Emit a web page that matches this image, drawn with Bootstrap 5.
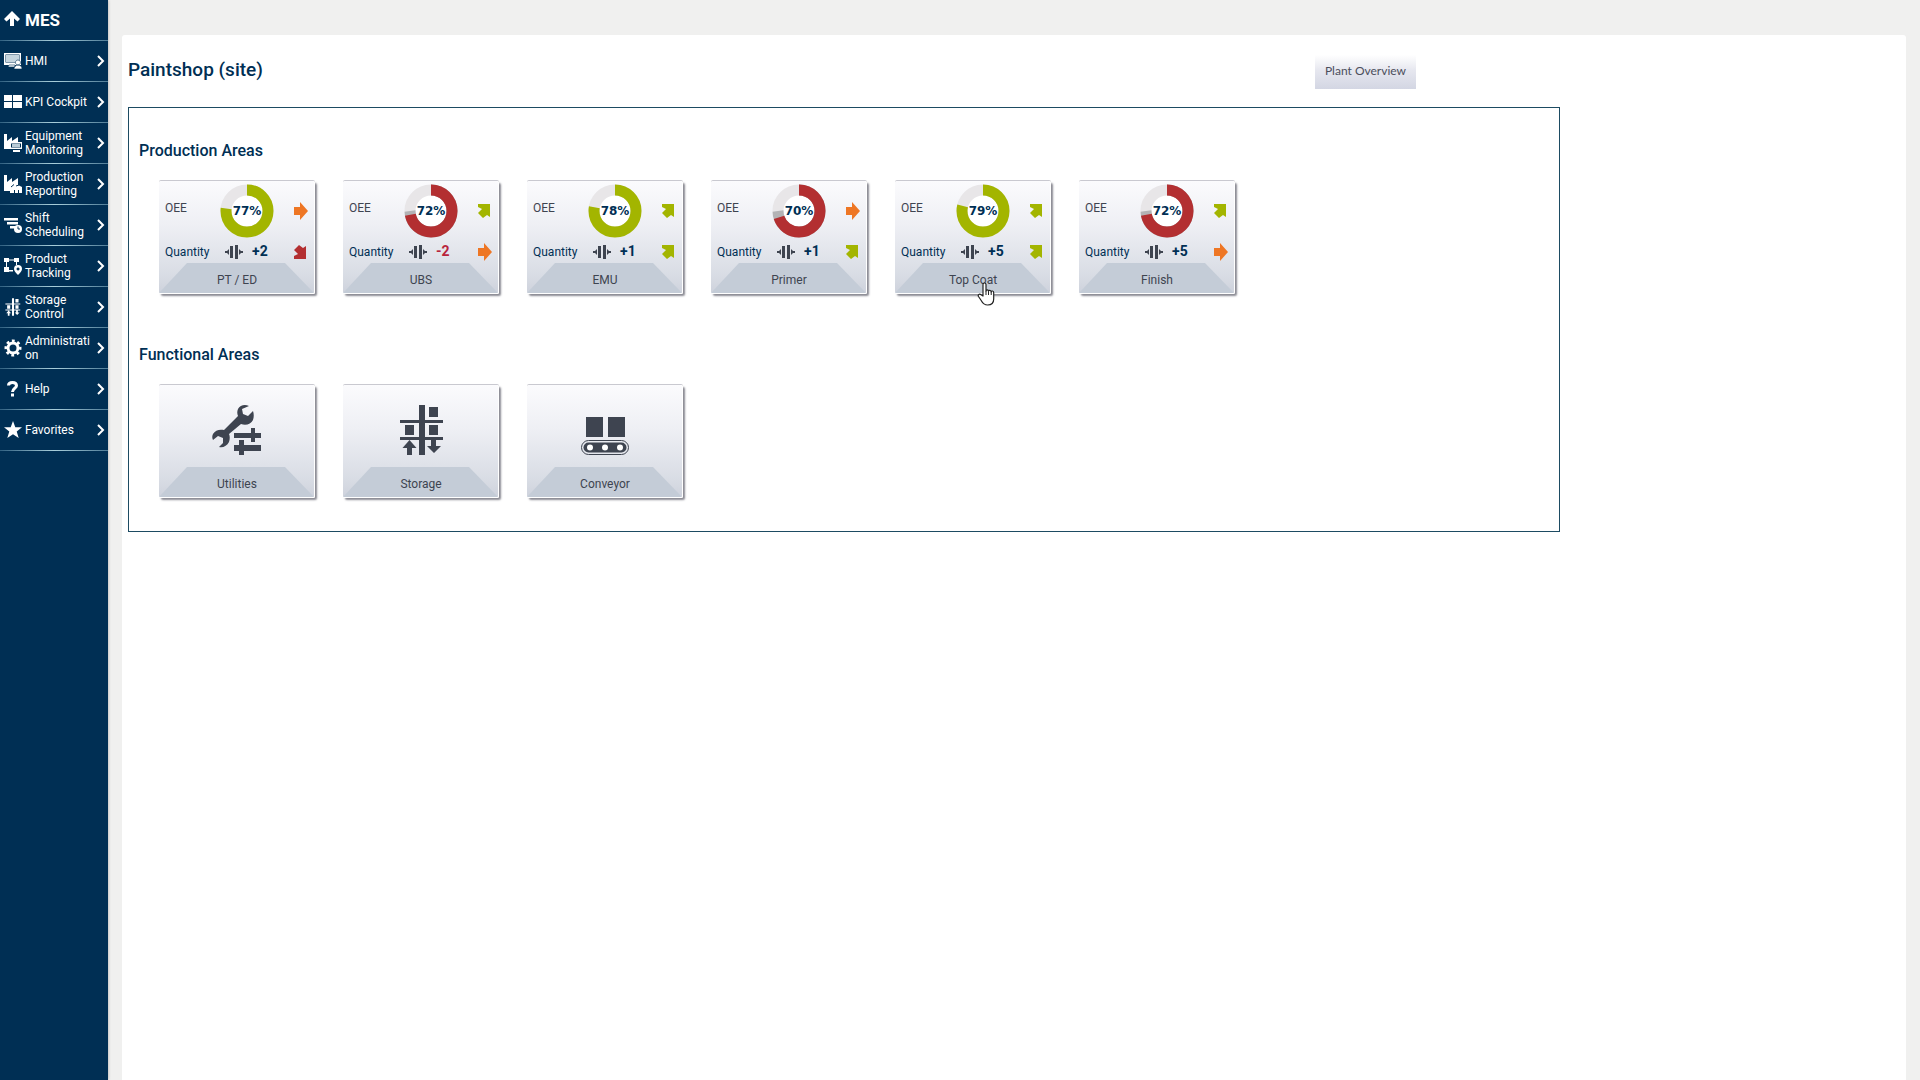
<!DOCTYPE html>
<html lang="en">
<head>
<meta charset="utf-8">
<meta name="viewport" content="width=device-width, initial-scale=1">
<title>MES - Paintshop</title>
<link href="https://cdn.jsdelivr.net/npm/bootstrap@5.3.0/dist/css/bootstrap.min.css" rel="stylesheet">
<style>
  :root { --navy: #002f54; --steel: #3e4450; }
  body { font-family: Roboto, "Liberation Sans", sans-serif; color: var(--navy); background: #f0f0ef; }
  a { color: inherit; text-decoration: none; }

  .side { width: 108px; background: var(--navy); color: #fff; box-shadow: 0 0 3px rgba(0,0,0,.3); }
  .side-row { height: 41px; padding: 0 3px 0 4px; color: #fff; border-bottom: 1px solid;
    border-image: linear-gradient(90deg, #2f5f80, #a9cfdb 50%, #4f7c97) 1; }
  .side-row svg { flex: none; fill: #fff; }
  .side-row .pict { width: 18px; height: 18px; margin-right: 3px; }
  .side-row .caption { flex: 1; padding-right: 4px; font-size: 12px; line-height: 14px; overflow-wrap: anywhere; }
  .side-row .chev { width: 8px; height: 12px; fill: none; stroke: #fff; stroke-width: 2; }
  .side-brand { font-size: 17px; font-weight: 700; }
  .side-brand span { padding-top: 2px; }

  .sheet { margin: 35px 14px 0 14px; padding: 20px 346px 0 6px; background: #fff; border-radius: 3px 3px 0 0; }
  .site-title { font-size: 19px; line-height: 30px; font-weight: 500; margin: 0; }
  .overview-btn { font: 12px/18px Lato, sans-serif; color: #4b4e5c; border: 0; padding: 7px 10px 9px;
    background: linear-gradient(#fff, #e6e7ef 45%, #d3d6e3); margin-right: 144px; }
  .frame { border: 1px solid #1d4b62; margin-top: 18px; padding: 33px 10px; }
  .area-title { font-size: 16px; line-height: 20px; font-weight: 500; margin: 0; }
  .tiles + .area-title { margin-top: 31px; }
  .tiles { display: flex; flex-wrap: wrap; gap: 28px; padding: 20px; }

  .tile { width: 156px; height: 113px; display: flex; flex-direction: column; color: var(--steel);
    background: linear-gradient(#fbfbfd, #eeeff4 40%, #d8dce4 85%, #ced2dc);
    border: solid #fff; border-width: 0 1px 1px 0; border-radius: 2px;
    box-shadow: 0 -1px 0 #c9c9d0, 2px 2px 2px rgba(60,60,75,.6); }
  .tile-foot { height: 30px; padding-left: 1px; font-size: 12px; line-height: 35px; text-align: center;
    background: #c4ccd7; clip-path: polygon(28px 0, 126px 0, 100% 100%, 0 100%); }
  .gauges { flex: 1; display: grid; grid-template-columns: 55px 1fr 29px; grid-template-rows: 59px 23px;
    align-items: center; padding-left: 6px; font-size: 12px; }
  .gauges > .mark-arrow { width: 16px; height: 18px; justify-self: center; }
  .gauges .lab { color: var(--navy); }
  .gauges .lab-top { color: var(--steel); padding-bottom: 5px; }
  .ring { width: 54px; height: 54px; display: block; }
  .ring circle { fill: none; stroke-width: 11; }
  .ring circle:first-child { fill: #fff; }
  .ring text { font: bold 12px "DejaVu Sans", sans-serif; fill: var(--navy); text-anchor: middle; }
  .delta { display: flex; align-items: center; gap: 9px; font-size: 14px; font-weight: 700; color: var(--navy); padding-left: 5px; }
  .delta svg { width: 18px; height: 16px; }
  .delta .neg { color: #b9243c; }
  .picto { flex: 1; display: flex; justify-content: center; align-items: end; padding-bottom: 11px; }
  .picto svg { width: 52px; height: 52px; }
  .pointer { position: absolute; left: 82px; top: 101px; width: 18px; height: 24px; z-index: 2; }
</style>
<script src="https://cdn.jsdelivr.net/npm/bootstrap@5.3.0/dist/js/bootstrap.bundle.min.js"></script>
</head>
<body>
<svg width="0" height="0" class="d-none" aria-hidden="true">
  <symbol id="chev" viewBox="0 0 8 12"><path d="M1 1l5 5-5 5"/></symbol>
  <symbol id="a-flat" viewBox="0 0 16 18"><path fill="#ee7624" d="M2 5h6V0l8 9-8 9v-5H2z"/></symbol>
  <symbol id="a-up" viewBox="0 0 16 18"><path fill="#a3b500" d="M2 2h12v13l-3-2-4 3-5-5 4-4-4-2z"/></symbol>
  <symbol id="a-down" viewBox="0 0 16 18"><path fill="#b32f31" d="M2 16h12V3l-3 2-4-3-5 5 4 4-4 2z"/></symbol>
  <symbol id="takt" viewBox="0 0 18 16"><path fill="#3e4450" d="M5 2h3v12H5zM10 1h3v14h-3zM4 5v6L2 9H0V7h2zM14 5v6l2-2h2V7h-2z"/></symbol>
  <symbol id="rack" viewBox="0 0 52 52"><path d="M21 1h6v50h-6zM2 16h43v3H2zM2 33h43v3H2zM31 3h9v10h-9zM7 21h9v10H7zM31 21h9v10h-9zM11.500 36l7 8h-4.500v7h-5v-7h-4.500zM33 36h5v6h5l-7 7-7-7h4z"/></symbol>
</svg>

<div class="d-flex min-vh-100">
  <nav class="side flex-shrink-0" aria-label="Main">
    <a class="side-row side-brand d-flex align-items-center" href="#">
      <svg class="pict" viewBox="0 0 18 18"><path d="M8 0l8 8-2.500 2.500L10 7.500V15H6V7.500L2.500 10.500 0 8z"/></svg><span>MES</span></a>
    <a class="side-row d-flex align-items-center" href="#">
      <svg class="pict" viewBox="0 0 18 18"><path fill-rule="evenodd" d="M0 1h17v12H0zM1.500 2.500v8h14v-8z"/><path fill="#c6d5de" d="M2 3h13v7H2z"/><path d="M5 13h6v2H4zM14 8a2.500 2.500 0 1 1-.1 0zM10 17c0-3 2-4 4-4s4 1 4 4z" stroke="#002f54" stroke-width=".6"/></svg>
      <span class="caption">HMI</span><svg class="chev"><use href="#chev"/></svg></a>
    <a class="side-row d-flex align-items-center" href="#">
      <svg class="pict" viewBox="0 0 18 18"><path d="M0 2h8v6H0zM9 2h9v6H9zM0 9h8v6H0zM9 9h9v6H9z"/></svg>
      <span class="caption">KPI Cockpit</span><svg class="chev"><use href="#chev"/></svg></a>
    <a class="side-row d-flex align-items-center" href="#">
      <svg class="pict" viewBox="0 0 18 18"><path d="M0 0h3v7l5-4v4l6-4v6H6v6H0z"/><path d="M6 8h12v7H6zM9 16h7v2H9z"/><path fill="#002f54" d="M7 9.500h10v4H7z"/><path fill="#b9cbd6" d="M8 10h8v3H8z"/></svg>
      <span class="caption">Equipment Monitoring</span><svg class="chev"><use href="#chev"/></svg></a>
    <a class="side-row d-flex align-items-center" href="#">
      <svg class="pict" viewBox="0 0 18 18"><path d="M0 0h3v7l5-4v4l6-4v7l4 2v6h-3v-3h-1v3h-3v-3h-1v3H6v-2H0z"/><path d="M7 12l3-2.500M12 11l3-1" stroke="#002f54"/></svg>
      <span class="caption">Production Reporting</span><svg class="chev"><use href="#chev"/></svg></a>
    <a class="side-row d-flex align-items-center" href="#">
      <svg class="pict" viewBox="0 0 18 18"><path d="M0 2h14v2.500H0zM3 6h11v2.500H3zM6 10h5v2.500H6z"/><circle cx="14" cy="13" r="4"/><path d="M14 10.500V13h2" fill="none" stroke="#002f54"/></svg>
      <span class="caption">Shift Scheduling</span><svg class="chev"><use href="#chev"/></svg></a>
    <a class="side-row d-flex align-items-center" href="#">
      <svg class="pict" viewBox="0 0 18 18"><path d="M0 1h5v4H0zM10 1h5v4h-5zM0 10h5v5H0zM5 2.500h5v1H5zM2 5h1v5H2zM5 13h4v1.500H5zM12 5h1v3h-1z"/><path fill-rule="evenodd" d="M14 8a4 4 0 0 1 4 4c0 2-2 4-4 6-2-2-4-4-4-6a4 4 0 0 1 4-4zm0 2.500a1.500 1.500 0 1 0 .1 0z"/></svg>
      <span class="caption">Product Tracking</span><svg class="chev"><use href="#chev"/></svg></a>
    <a class="side-row d-flex align-items-center" href="#">
      <svg class="pict" viewBox="0 0 48 52"><use href="#rack" width="52" height="52"/></svg>
      <span class="caption">Storage Control</span><svg class="chev"><use href="#chev"/></svg></a>
    <a class="side-row d-flex align-items-center" href="#">
      <svg class="pict" viewBox="0 0 18 18"><circle cx="9" cy="9" r="5" fill="none" stroke="#fff" stroke-width="3"/><circle cx="9" cy="9" r="7" fill="none" stroke="#fff" stroke-width="3" pathLength="80" stroke-dasharray="5" stroke-dashoffset="2"/></svg>
      <span class="caption">Administration</span><svg class="chev"><use href="#chev"/></svg></a>
    <a class="side-row d-flex align-items-center" href="#">
      <svg class="pict" viewBox="0 0 18 18"><path d="M4.500 5.500C4.500 3 6.500 2.500 8.500 2.500s4 1 4 3.200c0 2.300-4 2.800-4 6.300" fill="none" stroke="#fff" stroke-width="3"/><path d="M7 13.500h3v3H7z"/></svg>
      <span class="caption">Help</span><svg class="chev"><use href="#chev"/></svg></a>
    <a class="side-row d-flex align-items-center" href="#">
      <svg class="pict" viewBox="0 0 18 18"><path d="M9 0l2.300 6.300H18l-5.300 4.200 2 6.500L9 13.200 3.300 17l2-6.500L0 6.300h6.700z"/></svg>
      <span class="caption">Favorites</span><svg class="chev"><use href="#chev"/></svg></a>
  </nav>

  <main class="sheet flex-grow-1">
    <header class="d-flex justify-content-between align-items-start">
      <h1 class="site-title">Paintshop (site)</h1>
      <button type="button" class="overview-btn">Plant Overview</button>
    </header>

    <div class="frame">
      <h2 class="area-title">Production Areas</h2>
      <div class="tiles">
        <a class="tile" href="#">
          <div class="gauges"><span class="lab-top">OEE</span>
            <svg class="ring" viewBox="0 0 54 54"><circle cx="27" cy="27" r="21" stroke="#e8e6e8"/><circle cx="27" cy="27" r="21" stroke="#a3b500" pathLength="100" stroke-dasharray="77 100" transform="rotate(-90 27 27)"/><text x="27" y="31">77%</text></svg>
            <svg class="mark-arrow"><use href="#a-flat"/></svg>
            <span class="lab">Quantity</span><span class="delta"><svg><use href="#takt"/></svg>+2</span><svg class="mark-arrow"><use href="#a-down"/></svg></div>
          <div class="tile-foot">PT / ED</div></a>
        <a class="tile" href="#">
          <div class="gauges"><span class="lab-top">OEE</span>
            <svg class="ring" viewBox="0 0 54 54"><circle cx="27" cy="27" r="21" stroke="#e8e6e8"/><circle cx="27" cy="27" r="21" stroke="#b3b3b5" pathLength="100" stroke-dasharray="75 100" transform="rotate(-90 27 27)"/><circle cx="27" cy="27" r="21" stroke="#b32f31" pathLength="100" stroke-dasharray="72 100" transform="rotate(-90 27 27)"/><text x="27" y="31">72%</text></svg>
            <svg class="mark-arrow"><use href="#a-up"/></svg>
            <span class="lab">Quantity</span><span class="delta"><svg><use href="#takt"/></svg><span class="neg">-2</span></span><svg class="mark-arrow"><use href="#a-flat"/></svg></div>
          <div class="tile-foot">UBS</div></a>
        <a class="tile" href="#">
          <div class="gauges"><span class="lab-top">OEE</span>
            <svg class="ring" viewBox="0 0 54 54"><circle cx="27" cy="27" r="21" stroke="#e8e6e8"/><circle cx="27" cy="27" r="21" stroke="#a3b500" pathLength="100" stroke-dasharray="78 100" transform="rotate(-90 27 27)"/><text x="27" y="31">78%</text></svg>
            <svg class="mark-arrow"><use href="#a-up"/></svg>
            <span class="lab">Quantity</span><span class="delta"><svg><use href="#takt"/></svg>+1</span><svg class="mark-arrow"><use href="#a-up"/></svg></div>
          <div class="tile-foot">EMU</div></a>
        <a class="tile" href="#">
          <div class="gauges"><span class="lab-top">OEE</span>
            <svg class="ring" viewBox="0 0 54 54"><circle cx="27" cy="27" r="21" stroke="#e8e6e8"/><circle cx="27" cy="27" r="21" stroke="#b3b3b5" pathLength="100" stroke-dasharray="75 100" transform="rotate(-90 27 27)"/><circle cx="27" cy="27" r="21" stroke="#b32f31" pathLength="100" stroke-dasharray="70 100" transform="rotate(-90 27 27)"/><text x="27" y="31">70%</text></svg>
            <svg class="mark-arrow"><use href="#a-flat"/></svg>
            <span class="lab">Quantity</span><span class="delta"><svg><use href="#takt"/></svg>+1</span><svg class="mark-arrow"><use href="#a-up"/></svg></div>
          <div class="tile-foot">Primer</div></a>
        <a class="tile position-relative" href="#">
          <div class="gauges"><span class="lab-top">OEE</span>
            <svg class="ring" viewBox="0 0 54 54"><circle cx="27" cy="27" r="21" stroke="#e8e6e8"/><circle cx="27" cy="27" r="21" stroke="#a3b500" pathLength="100" stroke-dasharray="79 100" transform="rotate(-90 27 27)"/><text x="27" y="31">79%</text></svg>
            <svg class="mark-arrow"><use href="#a-up"/></svg>
            <span class="lab">Quantity</span><span class="delta"><svg><use href="#takt"/></svg>+5</span><svg class="mark-arrow"><use href="#a-up"/></svg></div>
          <div class="tile-foot">Top Coat</div>
          <svg class="pointer" viewBox="0 0 18 24"><path fill="#fff" stroke="#222" stroke-width="1.200" stroke-linejoin="round" d="M6 14V2.500C6 .5 9 .5 9 2.500V9c0-1.500 2.500-1.500 2.500.3 0-1.500 2.700-1.300 2.700.6 0-1.400 2.500-1.200 2.500.8V17c0 4-2 6-6 6-3.500 0-5-1.500-6.500-4.500L1.500 14.500c-1-2 1-3 2.500-1.800z"/><path stroke="#222" d="M9 9v4M11.500 9.500V13M14.200 10v3"/></svg></a>
        <a class="tile" href="#">
          <div class="gauges"><span class="lab-top">OEE</span>
            <svg class="ring" viewBox="0 0 54 54"><circle cx="27" cy="27" r="21" stroke="#e8e6e8"/><circle cx="27" cy="27" r="21" stroke="#b3b3b5" pathLength="100" stroke-dasharray="75 100" transform="rotate(-90 27 27)"/><circle cx="27" cy="27" r="21" stroke="#b32f31" pathLength="100" stroke-dasharray="72 100" transform="rotate(-90 27 27)"/><text x="27" y="31">72%</text></svg>
            <svg class="mark-arrow"><use href="#a-up"/></svg>
            <span class="lab">Quantity</span><span class="delta"><svg><use href="#takt"/></svg>+5</span><svg class="mark-arrow"><use href="#a-flat"/></svg></div>
          <div class="tile-foot">Finish</div></a>
      </div>

      <h2 class="area-title">Functional Areas</h2>
      <div class="tiles pb-0">
        <a class="tile" href="#">
          <div class="picto"><svg viewBox="0 0 52 52" fill="#3e4450"><path d="M38 2c-4-2-9-1-11 3-1 2-1 5 0 7L13 26c-4-1-9 0-11 4-1 2-1 4 0 6l5-4 5 2v5l-4 4c4 1 8-1 10-5 1-3 1-6 0-8l12-10c5 2 10 0 12-4 1-3 1-6 0-9l-5 5-5-2-1-5z"/><path d="M23 29h17v-5h4v5h6v5h-6v4h-4v-4H23zM23 41h5v-5h5v5h17v6H33v4h-5v-4h-5z"/></svg></div>
          <div class="tile-foot">Utilities</div></a>
        <a class="tile" href="#">
          <div class="picto"><svg viewBox="-3 0 52 52" fill="#3e4450"><use href="#rack" width="52" height="52"/></svg></div>
          <div class="tile-foot">Storage</div></a>
        <a class="tile" href="#">
          <div class="picto"><svg viewBox="0 0 52 52" fill="#3e4450"><path d="M7 13h17v20H7zM29 13h17v20H29z"/><rect x="2.500" y="36.500" width="47" height="14" rx="7" fill="none" stroke="#3e4450"/><rect x="4.500" y="38.500" width="43" height="10" rx="5"/><g fill="#fff"><circle cx="11" cy="43.500" r="3"/><circle cx="26" cy="43.500" r="3"/><circle cx="41" cy="43.500" r="3"/></g></svg></div>
          <div class="tile-foot">Conveyor</div></a>
      </div>
    </div>
  </main>
</div>
</body>
</html>
